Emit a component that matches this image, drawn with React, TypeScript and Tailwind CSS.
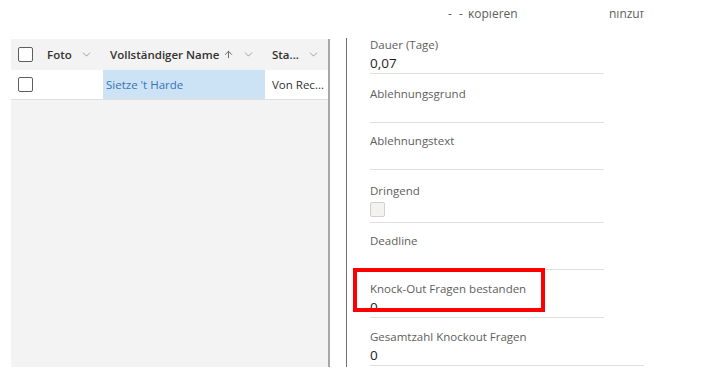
import { ChevronDown, ArrowUp } from "lucide-react";

const font = { fontFamily: '"Open Sans", "Noto Sans", Arial, sans-serif' };

function Checkbox({ className = "" }: { className?: string }) {
  return <span className={`block h-[15px] w-[15px] rounded-[2px] border border-[#605e5c] bg-white ${className}`} />;
}

function HeaderCell({ label, sort, className = "" }: { label: string; sort?: boolean; className?: string }) {
  return (
    <div className={`flex items-center whitespace-nowrap pl-[7px] ${className}`}>
      <span className="text-[11.5px] font-semibold text-[#323130]">{label}</span>
      {sort && <ArrowUp size={11} strokeWidth={2} className="ml-[4px] text-[#605e5c]" />}
      <ChevronDown size={13} strokeWidth={1.4} className="ml-[8px] text-[#8a8886]" />
    </div>
  );
}

/** One read-only form field: label, value, bottom rule. */
function Field({
  label,
  value,
  pad,
  wide = false,
  children,
}: {
  label: string;
  value?: string;
  pad: string;
  wide?: boolean;
  children?: React.ReactNode;
}) {
  return (
    <div className={`${pad} ${wide ? "w-[274px]" : "w-[234px]"} border-b border-[#e1dfdd]`}>
      <div className="h-[16px] whitespace-nowrap text-[11.5px] leading-[16px] text-[#605e5c]">{label}</div>
      <div className="h-[20px] text-[13.5px] leading-[20px] text-[#201f1e]">{children ?? value}</div>
    </div>
  );
}

export default function App() {
  return (
    <div className="relative h-[382px] w-[710px] overflow-hidden bg-white" style={font}>
      {/* clipped toolbar remnants */}
      <div className="relative h-[39px]">
        <div className="absolute left-0 right-0 top-[11px] h-[11px] overflow-hidden text-[12px] text-[#605e5c]">
          <span className="absolute left-[448px] top-[-6px] tracking-[2px]">- -</span>
          <span className="absolute left-[468px] top-[-6px]">kopieren</span>
          <span className="absolute left-[609px] top-[-6px]">hinzuf</span>
        </div>
      </div>

      <div className="flex">
        {/* grid */}
        <div className="ml-[11px] flex h-[328px] w-[319px] flex-col border-r-2 border-[#a6a6a6] bg-[#f3f3f3]">
          <div className="flex h-[31px] items-center">
            <div className="w-[29px] pl-[7px]">
              <Checkbox />
            </div>
            <HeaderCell label="Foto" className="w-[63px]" />
            <HeaderCell label="Vollständiger Name" sort className="w-[162px]" />
            <HeaderCell label="Sta..." className="flex-1" />
          </div>
          <div className="flex h-[30px] items-center border-b border-[#e1dfdd] bg-white">
            <div className="w-[29px] pl-[7px]">
              <Checkbox />
            </div>
            <div className="ml-[63px] flex h-full w-[162px] items-center bg-[#cce3f5] pl-[3px] text-[11.5px] text-[#3a72b8]">
              Sietze 't Harde
            </div>
            <div className="whitespace-nowrap pl-[7px] text-[11.5px] text-[#323130]">Von Rec...</div>
          </div>
        </div>

        <div className="ml-[16px] h-[329px] w-px -translate-y-px bg-[#707070]" />

        {/* form */}
        <div className="-mt-[2px] ml-[23px] flex flex-col">
          <Field label="Dauer (Tage)" value="0,07" pad="pt-[0px]" />
          <Field label="Ablehnungsgrund" pad="pt-[12px]" />
          <Field label="Ablehnungstext" pad="pt-[10px]" />
          <Field label="Dringend" pad="pt-[13px]">
            <span className="mt-[3px] block h-[15px] w-[15px] rounded-[2px] border border-[#d2d0ce] bg-[#f3f2f1]" />
          </Field>
          <Field label="Deadline" pad="pt-[10px]" />
          <Field label="Knock-Out Fragen bestanden" value="0" pad="pt-[11px]" />
          <Field label="Gesamtzahl Knockout Fragen" value="0" pad="pt-[11px]" wide />
        </div>
      </div>

      {/* highlight marker */}
      <div className="absolute left-[353px] top-[268px] h-[44px] w-[192px] border-[4px] border-[#ff0000]" />
    </div>
  );
}
